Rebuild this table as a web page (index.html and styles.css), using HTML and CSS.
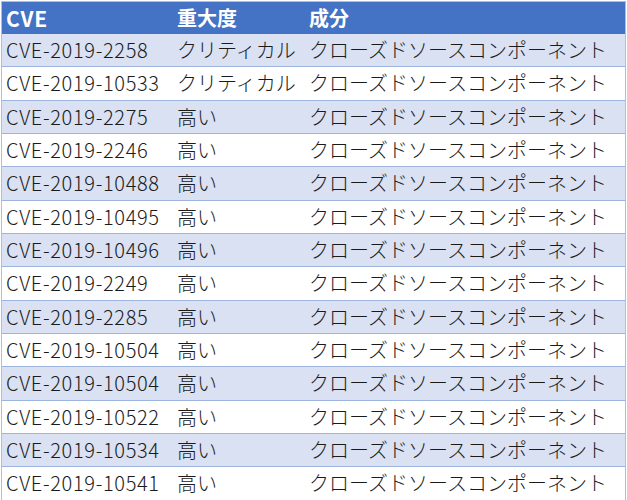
FILE: index.html
```html
<!DOCTYPE html>
<html lang="ja">
<head>
<meta charset="utf-8">
<link rel="stylesheet" href="styles.css">
</head>
<body>
<div class="table">
  <div class="row head"><div class="cell id">CVE</div><div class="cell">重大度</div><div class="cell">成分</div></div>
  <div class="row alt"><div class="cell id">CVE-2019-2258</div><div class="cell">クリティカル</div><div class="cell">クローズドソースコンポーネント</div></div>
  <div class="row"><div class="cell id">CVE-2019-10533</div><div class="cell">クリティカル</div><div class="cell">クローズドソースコンポーネント</div></div>
  <div class="row alt"><div class="cell id">CVE-2019-2275</div><div class="cell">高い</div><div class="cell">クローズドソースコンポーネント</div></div>
  <div class="row"><div class="cell id">CVE-2019-2246</div><div class="cell">高い</div><div class="cell">クローズドソースコンポーネント</div></div>
  <div class="row alt"><div class="cell id">CVE-2019-10488</div><div class="cell">高い</div><div class="cell">クローズドソースコンポーネント</div></div>
  <div class="row"><div class="cell id">CVE-2019-10495</div><div class="cell">高い</div><div class="cell">クローズドソースコンポーネント</div></div>
  <div class="row alt"><div class="cell id">CVE-2019-10496</div><div class="cell">高い</div><div class="cell">クローズドソースコンポーネント</div></div>
  <div class="row"><div class="cell id">CVE-2019-2249</div><div class="cell">高い</div><div class="cell">クローズドソースコンポーネント</div></div>
  <div class="row alt"><div class="cell id">CVE-2019-2285</div><div class="cell">高い</div><div class="cell">クローズドソースコンポーネント</div></div>
  <div class="row"><div class="cell id">CVE-2019-10504</div><div class="cell">高い</div><div class="cell">クローズドソースコンポーネント</div></div>
  <div class="row alt"><div class="cell id">CVE-2019-10504</div><div class="cell">高い</div><div class="cell">クローズドソースコンポーネント</div></div>
  <div class="row"><div class="cell id">CVE-2019-10522</div><div class="cell">高い</div><div class="cell">クローズドソースコンポーネント</div></div>
  <div class="row alt"><div class="cell id">CVE-2019-10534</div><div class="cell">高い</div><div class="cell">クローズドソースコンポーネント</div></div>
  <div class="row"><div class="cell id">CVE-2019-10541</div><div class="cell">高い</div><div class="cell">クローズドソースコンポーネント</div></div>
</div>
</body>
</html>
```
FILE: styles.css
```css
html, body {
  margin: 0;
  padding: 0;
  background: #ffffff;
}
body {
  font-family: "Noto Sans CJK JP", "Noto Sans", sans-serif;
  font-size: 20px;
  font-weight: 300;
  color: #1a1a1a;
}
.table {
  margin: 1px 0 0 1px;
  width: 625px;
  box-sizing: border-box;
  border-top: 1px solid #a9bfe6;
  border-left: 1px solid #a9bfe6;
  border-right: 1px solid #a9bfe6;
}
.row {
  display: grid;
  grid-template-columns: 171px 132px 1fr;
  height: 33.33px;
  box-sizing: border-box;
  border-bottom: 1px solid #9db4df;
  align-items: center;
  background: #ffffff;
}
.row.alt {
  background: #d9e1f2;
}
.row.head {
  background: #4472c4;
  color: #ffffff;
  font-weight: 700;
  height: 32px;
  border-bottom: none;
}
.cell {
  padding-left: 4px;
  white-space: nowrap;
  line-height: 1;
}
.cell.id {
  letter-spacing: 0.65px;
}
.row.head .cell.id {
  font-size: 21px;
  letter-spacing: 0.8px;
}
```
